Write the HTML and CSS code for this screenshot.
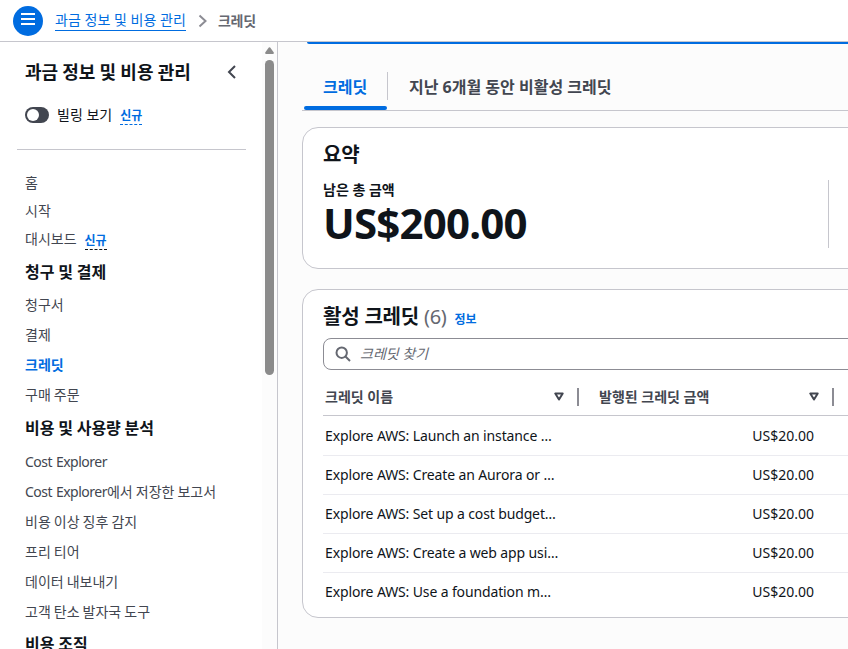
FILE: index.html
```html
<!DOCTYPE html>
<html lang="ko">
<head>
    <meta charset="UTF-8">
    <meta name="viewport" content="width=device-width, initial-scale=1.0">
    <title>크레딧</title>
    <link rel="stylesheet" href="styles.css">
</head>
<body>
    <header class="topbar">
        <button class="menu-button" aria-label="메뉴">
            <svg width="14" height="14" viewBox="0 0 14 14"><path d="M0 2h14M0 7h14M0 12h14" stroke="#fff" stroke-width="2"/></svg>
        </button>
        <a class="crumb-link" href="#">과금 정보 및 비용 관리</a>
        <svg class="crumb-arrow" width="10" height="14" viewBox="0 0 10 14"><path d="M1.5 1.5L7.5 7l-6 5.5" fill="none" stroke="#8c8c94" stroke-width="2"/></svg>
        <span class="crumb-current">크레딧</span>
    </header>
    <div class="layout">
        <aside class="sidebar">
            <div class="sidebar-content">
                <div class="sidebar-header">
                    <h2>과금 정보 및 비용 관리</h2>
                    <svg width="10" height="14" viewBox="0 0 10 14"><path d="M8 1L2 7l6 6" fill="none" stroke="#424650" stroke-width="2"/></svg>
                </div>
                <div class="billing-view">
                    <span class="toggle"></span>
                    <span>빌링 보기</span>
                    <a class="new" href="#">신규</a>
                </div>
                <nav class="nav">
                    <ul class="nav-top">
                        <li>홈</li>
                        <li>시작</li>
                        <li>대시보드 <a class="new new-dark" href="#">신규</a></li>
                    </ul>
                    <h3>청구 및 결제</h3>
                    <ul>
                        <li>청구서</li>
                        <li>결제</li>
                        <li class="active">크레딧</li>
                        <li>구매 주문</li>
                    </ul>
                    <h3 class="usage">비용 및 사용량 분석</h3>
                    <ul>
                        <li><span class="latin">Cost Explorer</span></li>
                        <li><span class="latin">Cost Explorer</span>에서 저장한 보고서</li>
                        <li>비용 이상 징후 감지</li>
                        <li>프리 티어</li>
                        <li>데이터 내보내기</li>
                        <li>고객 탄소 발자국 도구</li>
                    </ul>
                    <h3 class="organize">비용 조직</h3>
                </nav>
            </div>
            <div class="scrollbar">
                <svg width="9" height="7" viewBox="0 0 9 7"><path d="M3.8.6Q4.5-.2 5.2.6L8.8 5.6Q9 7 8 7H1Q0 7 .2 5.6z" fill="#8b8b8b"/></svg>
                <div class="scroll-thumb"></div>
            </div>
        </aside>
        <main class="main">
            <div class="notice"></div>
            <div class="tabs">
                <div class="tab tab-active"><span>크레딧</span></div>
                <div class="tab"><span>지난 6개월 동안 비활성 크레딧</span></div>
            </div>
            <section class="card summary">
                <h2>요약</h2>
                <div class="summary-row">
                    <div class="label">남은 총 금액</div>
                    <div class="amount">US$200.00</div>
                </div>
            </section>
            <section class="card credits">
                <div class="credits-header">
                    <h2>활성 크레딧</h2>
                    <span class="count">(6)</span>
                    <a class="info" href="#">정보</a>
                </div>
                <div class="search">
                    <svg width="16" height="16" viewBox="0 0 16 16" fill="none" stroke="#656871" stroke-width="2"><circle cx="6.7" cy="6.7" r="5.2"/><path d="M10.5 10.5L15 15"/></svg>
                    <span>크레딧 찾기</span>
                </div>
                <div class="table">
                    <div class="row head">
                        <div class="cell name">크레딧 이름 <svg width="10" height="9" viewBox="0 0 10 9"><path d="M1.3 1.5h7.4L5 7.5z" fill="none" stroke="#424650" stroke-width="2" stroke-linejoin="round"/></svg></div>
                        <div class="cell value">발행된 크레딧 금액 <svg width="10" height="9" viewBox="0 0 10 9"><path d="M1.3 1.5h7.4L5 7.5z" fill="none" stroke="#424650" stroke-width="2" stroke-linejoin="round"/></svg></div>
                    </div>
                    <div class="row">
                        <div class="cell name">Explore AWS: Launch an instance …</div>
                        <div class="cell value">US$20.00</div>
                    </div>
                    <div class="row">
                        <div class="cell name">Explore AWS: Create an Aurora or …</div>
                        <div class="cell value">US$20.00</div>
                    </div>
                    <div class="row">
                        <div class="cell name">Explore AWS: Set up a cost budget…</div>
                        <div class="cell value">US$20.00</div>
                    </div>
                    <div class="row">
                        <div class="cell name">Explore AWS: Create a web app usi…</div>
                        <div class="cell value">US$20.00</div>
                    </div>
                    <div class="row">
                        <div class="cell name">Explore AWS: Use a foundation m…</div>
                        <div class="cell value">US$20.00</div>
                    </div>
                </div>
            </section>
        </main>
    </div>
</body>
</html>
```
FILE: styles.css
```css
* {
    box-sizing: border-box;
}
body {
    margin: 0;
    height: 100vh;
    overflow: hidden;
    display: flex;
    flex-direction: column;
    background: #fff;
    color: #0f141a;
    font-family: "Noto Sans", "Noto Sans CJK KR", sans-serif;
    font-size: 14px;
    line-height: 20px;
}
h2, h3, ul {
    margin: 0;
    padding: 0;
    list-style: none;
}
a {
    color: #006ce0;
    text-decoration: none;
}
svg {
    display: block;
    flex: none;
}
.topbar {
    flex: none;
    display: flex;
    align-items: center;
    height: 42px;
    padding-left: 13px;
    border-bottom: 1px solid #c6c6cd;
    white-space: nowrap;
}
.menu-button {
    width: 30px;
    height: 30px;
    padding: 0 0 3px;
    border: none;
    border-radius: 50%;
    background: #006ce0;
    display: flex;
    align-items: center;
    justify-content: center;
}
.crumb-link {
    margin-left: 12px;
    border-bottom: 1px solid #006ce0;
    word-spacing: 0.1px;
}
.crumb-arrow {
    margin: 0 10px 0 12px;
}
.crumb-current {
    color: #656871;
    font-weight: 700;
    letter-spacing: -0.2px;
}
.layout {
    flex: 1;
    display: flex;
    min-height: 0;
}
.sidebar {
    width: 278px;
    flex: none;
    display: flex;
    border-right: 1px solid #c6c6cd;
    overflow: hidden;
}
.sidebar-content {
    flex: 1;
    white-space: nowrap;
}
.sidebar-header {
    display: flex;
    justify-content: space-between;
    align-items: center;
    height: 60px;
    padding: 0 25px;
}
.sidebar-header h2 {
    font-size: 18px;
    line-height: 24px;
    word-spacing: -0.5px;
}
.billing-view {
    display: flex;
    align-items: center;
    gap: 8px;
    margin: 0 16px 0 17px;
    padding: 0 8px 21px;
    box-sizing: content-box;
    height: 26px;
    border-bottom: 1px solid #c6c6cd;
}
.toggle {
    width: 24px;
    height: 16px;
    padding: 2px;
    border-radius: 8px;
    background: #424650;
}
.toggle::after {
    content: "";
    display: block;
    width: 12px;
    height: 12px;
    border-radius: 50%;
    background: #fff;
}
.new {
    padding-top: 1px;
    font-size: 12px;
    line-height: 17px;
    font-weight: 700;
    border-bottom: 1px dashed #006ce0;
}
.new-dark {
    margin: 2px 0 0 8px;
    border-color: #0f141a;
}
.nav {
    padding: 19px 25px 0;
    color: #424650;
    word-spacing: -0.6px;
}
.nav li {
    display: flex;
    align-items: center;
    height: 30px;
}
.nav .nav-top li {
    height: 28px;
}
.nav .active {
    color: #006ce0;
    font-weight: 700;
}
.nav h3 {
    height: 37px;
    font-size: 16px;
    line-height: 38px;
    color: #0f141a;
    word-spacing: -0.4px;
}
.nav .usage {
    line-height: 37px;
}
.nav .organize {
    line-height: 34px;
}
.latin {
    letter-spacing: -0.5px;
    word-spacing: 0.7px;
}
.scrollbar {
    width: 15px;
    display: flex;
    flex-direction: column;
    align-items: center;
    gap: 6px;
    padding-top: 5px;
    background: #fcfcfc;
}
.scroll-thumb {
    width: 9px;
    height: 315px;
    border-radius: 5px;
    background: #8b8b8b;
}
.main {
    flex: 1;
    min-width: 0;
    padding-left: 24px;
    background: #fcfcfc;
    white-space: nowrap;
    overflow: hidden;
}
.notice {
    height: 2px;
    margin-left: 5px;
    border-radius: 0 0 0 5px;
    background: #006ce0;
}
.tabs {
    display: flex;
    height: 67px;
    padding-left: 2px;
    border-bottom: 1px solid #c6c6cd;
    font-size: 16px;
    font-weight: 700;
    color: #424650;
}
.tab {
    display: flex;
    flex-direction: column;
    padding: 28px 0 0 21px;
}
.tab span {
    height: 28px;
    line-height: 30px;
}
.tab-active {
    width: 84px;
    padding-left: 0;
    color: #006ce0;
}
.tab-active span {
    padding-left: 19px;
    border-right: 1px solid #c6c6cd;
}
.tab-active::after {
    content: "";
    height: 4px;
    margin: 6px 1px 0 0;
    border-radius: 2px;
    background: #006ce0;
}
.card {
    width: 640px;
    border: 1px solid #c6c6cd;
    border-radius: 16px;
    background: #fff;
}
.card h2 {
    font-size: 20px;
    line-height: 24px;
    letter-spacing: -0.2px;
}
.summary {
    height: 142px;
    margin-top: 16px;
    padding: 15px 20px 0;
}
.summary-row {
    width: 506px;
    height: 68px;
    margin-top: 13px;
    border-right: 1px solid #c6c6cd;
}
.label {
    font-weight: 700;
    line-height: 19px;
}
.amount {
    font-size: 42px;
    line-height: 48px;
    font-weight: 700;
    letter-spacing: -0.8px;
}
.credits {
    height: 329px;
    margin-top: 20px;
    padding: 15px 0 0 20px;
}
.credits-header {
    display: flex;
    align-items: baseline;
    height: 24px;
}
.count {
    margin-left: 5px;
    font-size: 20px;
    letter-spacing: -0.3px;
    color: #656871;
}
.info {
    margin-left: 8px;
    font-size: 12px;
    font-weight: 700;
}
.search {
    display: flex;
    align-items: center;
    gap: 9px;
    height: 32px;
    margin-top: 9px;
    padding-left: 11px;
    border: 1px solid #8c8c94;
    border-radius: 8px;
    color: #656871;
    font-style: italic;
}
.row {
    display: flex;
    align-items: center;
    height: 39px;
    border-bottom: 1px solid #ebebf0;
}
.row:last-child {
    border-color: transparent;
}
.head {
    height: 46px;
    padding-top: 8px;
    border-color: #c6c6cd;
    font-weight: 700;
    color: #424650;
}
.row:nth-child(2) {
    height: 40px;
}
.cell {
    padding-left: 2px;
}
.name {
    width: 256px;
    letter-spacing: -0.13px;
}
.value {
    width: 255px;
    padding-right: 20px;
    text-align: right;
}
.head .cell {
    display: flex;
    justify-content: space-between;
    align-items: center;
    height: 18px;
    padding-right: 13px;
    border-right: 2px solid #8c8c94;
    letter-spacing: 0;
}
.head .value {
    padding-left: 20px;
}
```
